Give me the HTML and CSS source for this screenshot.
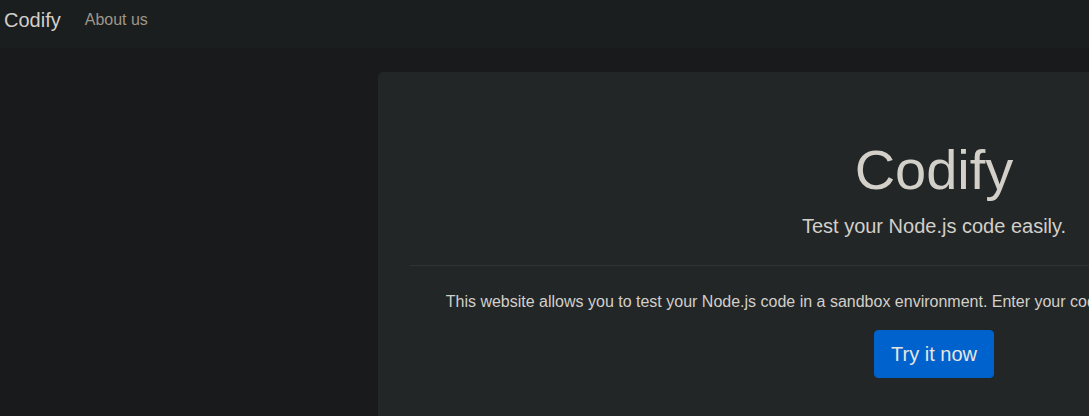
FILE: index.html
```html
<!DOCTYPE html>
<html lang="en">
<head>
<meta charset="utf-8">
<title>Codify</title>
<link rel="stylesheet" href="styles.css">
</head>
<body>
<nav class="navbar">
  <a class="brand" href="#">Codify</a>
  <a class="nav-link" href="#">About us</a>
</nav>
<main class="main">
  <section class="jumbotron">
    <h1 class="display">Codify</h1>
    <p class="lead">Test your Node.js code easily.</p>
    <hr class="divider">
    <p class="desc">This website allows you to test your Node.js code in a sandbox environment. Enter your code below and click run button to see the output.</p>
    <a class="btn" href="#">Try it now</a>
  </section>
</main>
</body>
</html>
```

FILE: styles.css
```css
html, body {
  margin: 0;
  padding: 0;
  overflow: hidden;
}
body {
  background: #181a1b;
  color: #d3cfc9;
  font-family: "Liberation Sans", Arial, sans-serif;
  font-size: 16px;
  line-height: 1.5;
  width: 1089px;
}
a { text-decoration: none; }
.navbar {
  display: flex;
  align-items: center;
  height: 40px;
  padding: 0 4px 8px 4px;
  background: #1b1e1f;
}
.brand {
  font-size: 20px;
  line-height: 30px;
  color: #d3cfc9;
  margin-right: 16px;
}
.nav-link {
  font-size: 16px;
  line-height: 24px;
  padding: 0 8px;
  color: #9e968a;
}
.main {
  padding: 24px 0 0 378px;
}
.jumbotron {
  width: 1048px;
  padding: 64px 32px;
  background: #222627;
  border-radius: 5px;
  text-align: center;
}
.display {
  margin: 0 0 8px 0;
  font-size: 56px;
  font-weight: 300;
  line-height: 1.2;
  color: #d3cfc9;
}
.lead {
  margin: 0 0 16px 0;
  font-size: 20px;
  font-weight: 300;
  line-height: 30px;
}
.divider {
  margin: 24px 0;
  border: 0;
  border-top: 1px solid rgba(140, 130, 115, 0.13);
}
.desc {
  margin: 0 0 16px 0;
  white-space: nowrap;
}
.btn {
  display: inline-block;
  font-size: 20px;
  line-height: 30px;
  padding: 8px 16px;
  border: 1px solid #0061c9;
  border-radius: 4px;
  background: #0062cc;
  color: #e8e6e3;
  box-sizing: border-box;
  height: 48px;
  width: 120px;
}
```
